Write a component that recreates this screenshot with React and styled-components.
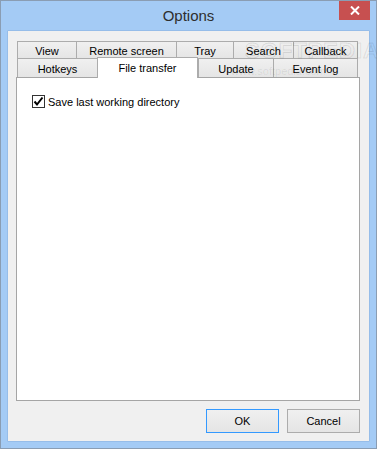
import React from "react";
import styled, { createGlobalStyle } from "styled-components";

const Global = createGlobalStyle`
  html, body { margin: 0; padding: 0; background: #a4cbf5; }
  body { font-family: "Liberation Sans", Arial, sans-serif; font-size: 11px; color: #000; }
`;

const Window = styled.div`
  box-sizing: border-box;
  width: 377px;
  height: 449px;
  border: 1px solid #8a9db3;
  background: #a4cbf5;
  display: flex;
  flex-direction: column;
  position: relative;
`;

const TitleBar = styled.div`
  height: 30px;
  display: grid;
  grid-template-columns: 1fr auto 1fr;
  align-items: start;
`;

const Title = styled.div`
  grid-column: 2;
  font-size: 15px;
  line-height: 30px;
  color: #2e2e2e;
`;

const CloseButton = styled.div`
  grid-column: 3;
  justify-self: end;
  margin-right: 6px;
  width: 31px;
  height: 19px;
  background: #c75050;
  display: flex;
  align-items: center;
  justify-content: center;
`;

const Client = styled.div`
  box-sizing: border-box;
  margin: 0 7px 7px 7px;
  flex: 1;
  background: #f0f0f0;
  padding: 10px 0 0 8px;
  display: flex;
  flex-direction: column;
  box-shadow: 0 0 0 0.5px #88b0de;
`;

const TabRow = styled.div`
  display: flex;
  padding-left: 1px;
  height: ${(p) => p.$h}px;
  position: relative;
`;

const Tab = styled.div`
  box-sizing: border-box;
  width: ${(p) => p.$w}px;
  height: 100%;
  border: 1px solid #acacac;
  border-right: ${(p) => (p.$last ? "1px solid #acacac" : "none")};
  border-bottom: none;
  background: linear-gradient(#f0f0f0, #e5e5e5);
  display: flex;
  align-items: center;
  justify-content: center;
  white-space: nowrap;
  padding-top: 1px;
`;

const ActiveTab = styled(Tab)`
  position: relative;
  z-index: 2;
  background: #fff;
  border-right: 1px solid #acacac;
  margin-top: -1px;
  height: calc(100% + 2px);
  padding-bottom: 2px;
`;

const Panel = styled.div`
  box-sizing: border-box;
  width: 344px;
  height: 324px;
  background: #fff;
  border: 1px solid #a5a5a5;
  padding: 17px 0 0 15px;
  position: relative;
  z-index: 1;
`;

const CheckRow = styled.label`
  display: flex;
  align-items: center;
  gap: 3px;
`;

const Box = styled.span`
  box-sizing: border-box;
  width: 13px;
  height: 13px;
  border: 1px solid #333;
  background: #fff;
  display: flex;
  align-items: center;
  justify-content: center;
`;

const ButtonRow = styled.div`
  display: flex;
  justify-content: flex-end;
  gap: 8px;
  padding: 8px 9px 0 0;
`;

const Button = styled.div`
  box-sizing: border-box;
  width: 73px;
  height: 24px;
  border: 1px solid ${(p) => (p.$default ? "#3399ff" : "#acacac")};
  background: linear-gradient(#f0f0f0, #e5e5e5);
  display: flex;
  align-items: center;
  justify-content: center;
`;

const Watermark = styled.div`
  position: absolute;
  left: 244px;
  top: 37px;
  font-size: 22px;
  font-weight: bold;
  letter-spacing: 1px;
  color: transparent;
  -webkit-text-stroke: 1px rgba(0, 0, 0, 0.1);
  z-index: 5;
  pointer-events: none;
`;

const WatermarkUrl = styled.div`
  position: absolute;
  left: 230px;
  top: 64px;
  font-size: 11px;
  color: rgba(0, 0, 0, 0.08);
  z-index: 5;
  pointer-events: none;
`;

const row1 = [
  ["View", 59],
  ["Remote screen", 100],
  ["Tray", 57],
  ["Search", 60],
  ["Callback", 65],
];
const row2 = [
  ["Hotkeys", 80],
  ["File transfer", 101, true],
  ["Update", 75],
  ["Event log", 85],
];

export default function App() {
  return (
    <>
      <Global />
      <Window>
        <TitleBar>
          <Title>Options</Title>
          <CloseButton>
            <svg width="10" height="9" viewBox="0 0 10 9">
              <path d="M1 0.5 L9 8.5 M9 0.5 L1 8.5" stroke="#fff" strokeWidth="2" />
            </svg>
          </CloseButton>
        </TitleBar>
        <Client>
          <TabRow $h={17}>
            {row1.map(([t, w], i) => (
              <Tab key={t} $w={w} $last={i === row1.length - 1}>
                {t}
              </Tab>
            ))}
          </TabRow>
          <TabRow $h={19}>
            {row2.map(([t, w, active], i) =>
              active ? (
                <ActiveTab key={t} $w={w}>
                  {t}
                </ActiveTab>
              ) : (
                <Tab key={t} $w={w} $last={i === row2.length - 1}>
                  {t}
                </Tab>
              )
            )}
          </TabRow>
          <Panel>
            <CheckRow>
              <Box>
                <svg width="11" height="11" viewBox="0 0 11 11">
                  <path d="M1.5 5.5 L4 8.5 L9.5 1.5" stroke="#000" strokeWidth="2" fill="none" />
                </svg>
              </Box>
              Save last working directory
            </CheckRow>
          </Panel>
          <ButtonRow>
            <Button $default>OK</Button>
            <Button>Cancel</Button>
          </ButtonRow>
        </Client>
        <Watermark>SOFTPEDIA</Watermark>
        <WatermarkUrl>www.softpedia.com</WatermarkUrl>
      </Window>
    </>
  );
}
